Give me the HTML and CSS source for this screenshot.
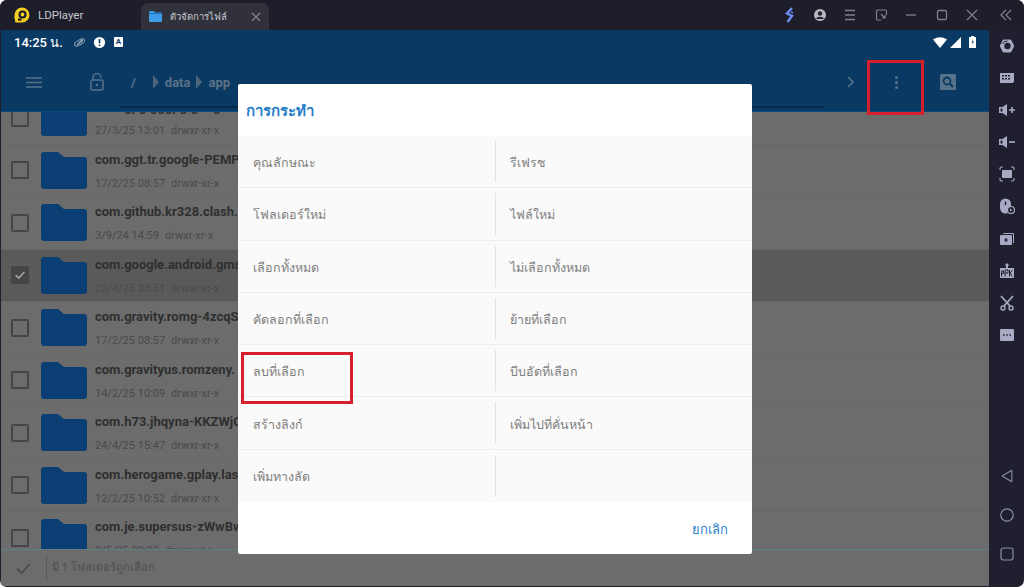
FILE: index.html
```html
<!DOCTYPE html>
<html lang="th">
<head>
<meta charset="utf-8">
<title>LDPlayer</title>
<link rel="stylesheet" href="styles.css">
</head>
<body>
<div class="app">
  <header class="titlebar">
    <svg class="logo" viewBox="0 0 16 16"><path d="M8 0.500a7.500 7.500 0 0 1 7.500 7.500 7.500 7.500 0 0 1-7.500 7.500H2.500a1.500 1.500 0 0 1-1.500-1.500V12H0.500V8A7.500 7.500 0 0 1 8 0.500z" fill="#f5cf1f"/><circle cx="8.500" cy="7.500" r="3" fill="none" stroke="#1d1d2b" stroke-width="2.200"/><rect x="4" y="11.500" width="3.500" height="2.200" fill="#1d1d2b"/></svg>
    <span class="brand">LDPlayer</span>
    <div class="tab">
      <svg class="tab-folder" viewBox="0 0 13 11"><path d="M0 1a1 1 0 0 1 1-1h4l1 1.500h6a1 1 0 0 1 1 1V10a1 1 0 0 1-1 1H1a1 1 0 0 1-1-1z" fill="#3d9be8"/><rect y="2" width="13" height="1" fill="#1d6fbb"/></svg>
      <span class="tab-title">ตัวจัดการไฟล์</span>
      <svg class="tab-close" viewBox="0 0 10 10"><path d="M1 1l8 8M9 1L1 9" stroke="#8b8b95" stroke-width="1.100"/></svg>
    </div>
    <div class="win-controls">
      <svg class="wi" viewBox="0 0 16 16"><path d="M10 1L5 6.500l5 2.500-4.500 6M10.500 5l-1 1" fill="none" stroke="#6d8ff0" stroke-width="2.400"/></svg>
      <svg class="wi" viewBox="0 0 16 16"><circle cx="8" cy="8" r="6" fill="#b9b9c4"/><circle cx="8" cy="6.500" r="2.200" fill="#23232f"/><path d="M3.800 12a4.500 3.500 0 0 1 8.400 0z" fill="#23232f"/></svg>
      <svg class="wi" viewBox="0 0 16 16"><path d="M3 3.500h10M3 8h10M3 12.500h10" stroke="#80808c" stroke-width="1.300"/></svg>
      <svg class="wi" viewBox="0 0 16 16"><path d="M8 13H4.500a1 1 0 0 1-1-1V4a1 1 0 0 1 1-1h8a1 1 0 0 1 1 1v4M8 7l4 4m0-3v3h-3" fill="none" stroke="#80808c" stroke-width="1.200"/></svg>
      <svg class="wi" viewBox="0 0 16 16"><path d="M3 8h10" stroke="#80808c" stroke-width="1.300"/></svg>
      <svg class="wi" viewBox="0 0 16 16"><rect x="3.500" y="3.500" width="9" height="9" rx="1.500" fill="none" stroke="#80808c" stroke-width="1.300"/></svg>
      <svg class="wi" viewBox="0 0 16 16"><path d="M3 3l10 10M13 3L3 13" stroke="#80808c" stroke-width="1.200"/></svg>
      <svg class="wi wi-collapse" viewBox="0 0 16 16"><path d="M8 3L3 8l5 5M13 3L8 8l5 5" fill="none" stroke="#80808c" stroke-width="1.200"/></svg>
    </div>
  </header>
  <div class="main">
    <main class="screen">
      <div class="statusbar">
        <span class="clock">14:25 น.</span>
        <svg class="si" viewBox="0 0 14 14"><ellipse cx="7" cy="7" rx="6" ry="2.600" transform="rotate(-30 7 7)" fill="none" stroke="#8fa3b5" stroke-width="1"/><path d="M9.500 3L5 8l-2 3 3-1.500L11 5" fill="#8fa3b5"/></svg>
        <svg class="si" viewBox="0 0 14 14"><circle cx="7" cy="7" r="6" fill="#fff"/><path d="M7 3.200v4.600M7 9.200v1.500" stroke="#0a3a63" stroke-width="1.700"/></svg>
        <span class="a-icon">A</span>
        <span class="status-right">
          <svg class="st-wifi" viewBox="0 0 14 11"><path d="M0 2.500Q7-2 14 2.500L7 11z" fill="#fff"/></svg>
          <svg class="st-signal" viewBox="0 0 11 11"><path d="M11 0v11H0z" fill="#fff"/></svg>
          <svg class="st-batt" viewBox="0 0 7 12"><path d="M2 0h3v1h1.500a.5.500 0 0 1 .5.500V11.500a.5.500 0 0 1-.5.500H.5a.5.500 0 0 1-.5-.500V1.500A.5.500 0 0 1 .5 1H2z" fill="#fff"/><path d="M4 3L2.500 6.500h1.500L3 9.500 5 5.500H3.700z" fill="#0a3a63"/></svg>
        </span>
      </div>
      <div class="toolbar">
        <svg class="tb-menu" viewBox="0 0 16 11"><path d="M0 1h16M0 5.500h16M0 10h16" stroke="#56738b" stroke-width="1.600"/></svg>
        <svg class="tb-lock" viewBox="0 0 14 18"><path d="M3 7V4.500a4 4 0 0 1 8 0V5" fill="none" stroke="#56738b" stroke-width="1.500"/><rect x="1" y="7" width="12" height="10" rx="1.500" fill="none" stroke="#56738b" stroke-width="1.500"/><circle cx="7" cy="12" r="1.300" fill="#56738b"/></svg>
        <div class="crumbs">
          <span class="crumb">/</span>
          <span class="crumb-sep"></span>
          <span class="crumb">data</span>
          <span class="crumb-sep"></span>
          <span class="crumb">app</span>
          <span class="crumb-track"></span>
        </div>
        <svg class="tb-next" viewBox="0 0 7 12"><path d="M1 1l5 5-5 5" fill="none" stroke="#56738b" stroke-width="1.600"/></svg>
        <span class="tb-more"><i></i><i></i><i></i></span>
        <svg class="tb-search" viewBox="0 0 16 16"><rect width="16" height="16" rx="1.500" fill="#56738b"/><circle cx="7" cy="7" r="3.500" fill="none" stroke="#0a3a63" stroke-width="1.800"/><path d="M9.500 9.500L13 13" stroke="#0a3a63" stroke-width="2"/></svg>
      </div>
      <div class="list">
        <div class="list-inner">
          <div class="row"><span class="check"></span><svg class="folder" viewBox="0 0 46 37"><path d="M0 3a3 3 0 0 1 3-3h14l6 5h20a3 3 0 0 1 3 3v26a3 3 0 0 1-3 3H3a3 3 0 0 1-3-3z"/></svg><div class="info"><div class="name">com.gpg.gggpg.google</div><div class="meta"><span>27/3/25 13:01</span><span>drwxr-xr-x</span></div></div></div>
          <div class="row"><span class="check"></span><svg class="folder" viewBox="0 0 46 37"><path d="M0 3a3 3 0 0 1 3-3h14l6 5h20a3 3 0 0 1 3 3v26a3 3 0 0 1-3 3H3a3 3 0 0 1-3-3z"/></svg><div class="info"><div class="name">com.ggt.tr.google-PEMP</div><div class="meta"><span>17/2/25 08:57</span><span>drwxr-xr-x</span></div></div></div>
          <div class="row"><span class="check"></span><svg class="folder" viewBox="0 0 46 37"><path d="M0 3a3 3 0 0 1 3-3h14l6 5h20a3 3 0 0 1 3 3v26a3 3 0 0 1-3 3H3a3 3 0 0 1-3-3z"/></svg><div class="info"><div class="name">com.github.kr328.clash.</div><div class="meta"><span>3/9/24 14:59</span><span>drwxr-xr-x</span></div></div></div>
          <div class="row selected"><span class="check on"><svg viewBox="0 0 16 16"><path d="M3 8l3.500 3.500L13 4.500" fill="none" stroke="#a8a8a8" stroke-width="1.800"/></svg></span><svg class="folder" viewBox="0 0 46 37"><path d="M0 3a3 3 0 0 1 3-3h14l6 5h20a3 3 0 0 1 3 3v26a3 3 0 0 1-3 3H3a3 3 0 0 1-3-3z"/></svg><div class="info"><div class="name">com.google.android.gms</div><div class="meta"><span>28/4/25 08:51</span><span>drwxr-xr-x</span></div></div></div>
          <div class="row"><span class="check"></span><svg class="folder" viewBox="0 0 46 37"><path d="M0 3a3 3 0 0 1 3-3h14l6 5h20a3 3 0 0 1 3 3v26a3 3 0 0 1-3 3H3a3 3 0 0 1-3-3z"/></svg><div class="info"><div class="name">com.gravity.romg-4zcqS</div><div class="meta"><span>17/2/25 08:57</span><span>drwxr-xr-x</span></div></div></div>
          <div class="row"><span class="check"></span><svg class="folder" viewBox="0 0 46 37"><path d="M0 3a3 3 0 0 1 3-3h14l6 5h20a3 3 0 0 1 3 3v26a3 3 0 0 1-3 3H3a3 3 0 0 1-3-3z"/></svg><div class="info"><div class="name">com.gravityus.romzeny.</div><div class="meta"><span>14/2/25 10:09</span><span>drwxr-xr-x</span></div></div></div>
          <div class="row"><span class="check"></span><svg class="folder" viewBox="0 0 46 37"><path d="M0 3a3 3 0 0 1 3-3h14l6 5h20a3 3 0 0 1 3 3v26a3 3 0 0 1-3 3H3a3 3 0 0 1-3-3z"/></svg><div class="info"><div class="name">com.h73.jhqyna-KKZWjC</div><div class="meta"><span>24/4/25 15:47</span><span>drwxr-xr-x</span></div></div></div>
          <div class="row"><span class="check"></span><svg class="folder" viewBox="0 0 46 37"><path d="M0 3a3 3 0 0 1 3-3h14l6 5h20a3 3 0 0 1 3 3v26a3 3 0 0 1-3 3H3a3 3 0 0 1-3-3z"/></svg><div class="info"><div class="name">com.herogame.gplay.las</div><div class="meta"><span>12/2/25 10:52</span><span>drwxr-xr-x</span></div></div></div>
          <div class="row"><span class="check"></span><svg class="folder" viewBox="0 0 46 37"><path d="M0 3a3 3 0 0 1 3-3h14l6 5h20a3 3 0 0 1 3 3v26a3 3 0 0 1-3 3H3a3 3 0 0 1-3-3z"/></svg><div class="info"><div class="name">com.je.supersus-zWwBw</div><div class="meta"><span>2/5/25 09:33</span><span>drwxr-xr-x</span></div></div></div>
        </div>
      </div>
      <div class="selbar">
        <svg class="sel-check" viewBox="0 0 16 14"><path d="M1 7l5 5L15 2" fill="none" stroke="#444" stroke-width="1.500"/></svg>
        <span class="sel-text">มี 1 โฟลเดอร์ถูกเลือก</span>
      </div>

      <div class="dialog">
        <h2 class="dialog-title">การกระทำ</h2>
        <div class="actions">
          <div class="action">คุณลักษณะ</div><div class="action">รีเฟรช</div>
          <div class="action">โฟลเดอร์ใหม่</div><div class="action">ไฟล์ใหม่</div>
          <div class="action">เลือกทั้งหมด</div><div class="action">ไม่เลือกทั้งหมด</div>
          <div class="action">คัดลอกที่เลือก</div><div class="action">ย้ายที่เลือก</div>
          <div class="action">ลบที่เลือก</div><div class="action">บีบอัดที่เลือก</div>
          <div class="action">สร้างลิงก์</div><div class="action">เพิ่มไปที่คั่นหน้า</div>
          <div class="action">เพิ่มทางลัด</div><div class="action"></div>
        </div>
        <div class="dialog-foot"><span class="cancel">ยกเลิก</span></div>
      </div>
      <div class="mark mark-more"></div>
      <div class="mark mark-delete"></div>
    </main>
    <aside class="sidebar">
      <div class="side-top">
        <svg class="sb" viewBox="0 0 16 16"><path d="M5 1.500h6a1.500 1.500 0 0 1 1.300.7l2.500 4.800a2 2 0 0 1 0 2l-2.500 4.800a1.500 1.500 0 0 1-1.300.7H5a1.500 1.500 0 0 1-1.300-.7L1.200 9a2 2 0 0 1 0-2l2.500-4.800A1.500 1.500 0 0 1 5 1.500z" fill="#a9a9c4"/><circle cx="8.500" cy="8" r="3.200" fill="#1f1f2f"/><path d="M3.500 6a5 5 0 0 1 5-3" fill="none" stroke="#1f1f2f" stroke-width="1"/></svg>
        <svg class="sb" viewBox="0 0 16 16"><path d="M1 3h14v9h-1v1H1z" fill="#a9a9c4"/><path d="M3 5h2v1.500H3zM6 5h2v1.500H6zM9 5h2v1.500H9zM3 8h2v1.500H3zM6 8h2v1.500H6zM9 8h2v1.500H9z" fill="#1f1f2f"/></svg>
        <svg class="sb" viewBox="0 0 16 16"><path d="M0 5h3.500L8 2v12l-4.500-3H0z" fill="#a9a9c4"/><path d="M1.500 6.500h2v3h-2z" fill="#1f1f2f"/><path d="M10 8h6M13 5v6" stroke="#a9a9c4" stroke-width="1.600"/></svg>
        <svg class="sb" viewBox="0 0 16 16"><path d="M0 5h3.500L8 2v12l-4.500-3H0z" fill="#a9a9c4"/><path d="M1.500 6.500h2v3h-2z" fill="#1f1f2f"/><path d="M10 8h6" stroke="#a9a9c4" stroke-width="1.600"/></svg>
        <svg class="sb" viewBox="0 0 16 16"><path d="M1 4V2.500A1.500 1.500 0 0 1 2.500 1H4M12 1h1.500A1.500 1.500 0 0 1 15 2.500V4M15 12v1.500a1.500 1.500 0 0 1-1.500 1.500H12M4 15H2.500A1.500 1.500 0 0 1 1 13.500V12" fill="none" stroke="#a9a9c4" stroke-width="1.100"/><rect x="3" y="4" width="10" height="8" rx="1" fill="#a9a9c4"/></svg>
        <svg class="sb" viewBox="0 0 16 16"><path d="M6.500 0.500A5.500 5.500 0 0 1 12 6v2.500A5 5 0 0 0 8.500 15.500h-2A5.500 5.500 0 0 1 1 10V6A5.500 5.500 0 0 1 6.500 0.500z" fill="#a9a9c4"/><path d="M6.500 3.500v3.500" stroke="#1f1f2f" stroke-width="1.400"/><circle cx="12" cy="12" r="3.500" fill="none" stroke="#a9a9c4" stroke-width="1.200"/><path d="M11 10.500v3l2.500-1.500z" fill="#a9a9c4"/></svg>
        <svg class="sb" viewBox="0 0 16 16"><path d="M4 3a1 1 0 0 1 1-1h9a1 1 0 0 1 1 1v9h-1V3H4z" fill="#a9a9c4"/><rect x="1" y="4" width="12" height="10" rx="1" fill="#a9a9c4"/><path d="M7 7v4M5 9h4" stroke="#1f1f2f" stroke-width="1.200"/></svg>
        <svg class="sb" viewBox="0 0 16 16"><path d="M8 0l2.500 2.500H9V5H7V2.500H5.500z" fill="#a9a9c4"/><rect x="1" y="5" width="14" height="10" fill="#a9a9c4"/><path d="M2.500 13.500V8h2v2.500h-2M6 13.500V7h3v3H6M10.500 7v6.500M13.500 7l-2.500 3 2.500 3.500" fill="none" stroke="#1f1f2f" stroke-width="1"/></svg>
        <svg class="sb" viewBox="0 0 16 16"><path d="M2 1l9 10M14 1L5 11" stroke="#a9a9c4" stroke-width="1.800"/><circle cx="4" cy="13" r="2" fill="none" stroke="#a9a9c4" stroke-width="1.400"/><circle cx="12" cy="13" r="2" fill="none" stroke="#a9a9c4" stroke-width="1.400"/></svg>
        <svg class="sb" viewBox="0 0 16 16"><rect x="1" y="2" width="14" height="12" rx="1" fill="#a9a9c4"/><path d="M4 8h1.500M7.300 8h1.500M10.500 8H12" stroke="#1f1f2f" stroke-width="1.500"/></svg>
      </div>
      <div class="side-nav">
        <svg class="nav" viewBox="0 0 14 16"><path d="M12.500 1.500v13L1.500 8z" fill="none" stroke="#8e8ea6" stroke-width="1.200" stroke-linejoin="round"/></svg>
        <svg class="nav" viewBox="0 0 14 14"><circle cx="7" cy="7" r="6.200" fill="none" stroke="#8e8ea6" stroke-width="1.200"/></svg>
        <svg class="nav" viewBox="0 0 14 14"><rect x="1" y="1" width="12" height="12" rx="2.500" fill="none" stroke="#8e8ea6" stroke-width="1.200"/></svg>
      </div>
    </aside>
  </div>
</div>
</body>
</html>
```
FILE: styles.css
```css
* { box-sizing: border-box; }
html, body { margin: 0; height: 100%; background: #fff; overflow: hidden; }
body { font-family: Roboto, "Noto Sans", "Liberation Sans", sans-serif; }

.app { width: 1024px; height: 587px; background: #1f1f2f; border-radius: 7px; overflow: hidden; display: flex; flex-direction: column; }

/* title bar */
.titlebar { height: 30px; flex: none; display: flex; align-items: center; background: #1e1e2b; padding-left: 14px; }
.logo { width: 16px; height: 16px; }
.brand { margin-left: 8px; width: 103px; font-size: 11.500px; color: #c6c6cf; }
.tab { align-self: flex-end; width: 128px; height: 27px; background: #30313b; border-radius: 7px 7px 0 0; display: flex; align-items: center; padding: 0 7px 0 8px; }
.tab-folder { width: 13px; height: 11px; flex: none; }
.tab-title { margin-left: 8px; flex: 1; font-size: 9.500px; color: #c9c9d0; }
.tab-close { width: 10px; height: 10px; flex: none; margin-right: 1px; }
.win-controls { margin-left: auto; display: flex; align-items: center; height: 100%; padding-right: 10px; }
.wi { width: 16px; height: 16px; margin-left: 14.400px; }
.wi-collapse { margin-left: 18px; }

/* android screen */
.main { flex: 1; display: flex; min-height: 0; }
.screen { position: relative; width: 988px; margin: 0 0 1px 1px; display: flex; flex-direction: column; overflow: hidden; background: #6c6c6c; }
.statusbar { height: 28px; flex: none; display: flex; align-items: center; padding: 0 13px 4px; background: #0a3a63; color: #fff; }
.clock { font-size: 13px; font-weight: 500; width: 59px; }
.si { width: 13px; height: 13px; margin-right: 7px; }
.a-icon { margin-left: 1px; width: 9px; height: 10px; background: #fff; color: #0a3a63; font-size: 8px; font-weight: 700; line-height: 10px; text-align: center; border-radius: 1px; }
.status-right { margin-left: auto; display: flex; align-items: center; }
.st-wifi { width: 14px; height: 11px; margin-right: 3px; }
.st-signal { width: 11px; height: 11px; margin-right: 8px; }
.st-batt { width: 7px; height: 12px; }

.toolbar { height: 53px; flex: none; display: flex; align-items: center; background: #0a3a63; padding: 0 32px 5px 25px; }
.tb-menu { width: 16px; height: 11px; flex: none; }
.tb-lock { width: 14px; height: 18px; margin-left: 48px; flex: none; }
.crumbs { position: relative; width: 703px; height: 100%; margin-left: 17px; padding-left: 10px; display: flex; align-items: center; }
.crumb { font-size: 13px; font-weight: 700; color: #5a7186; }
.crumb-sep { width: 0; height: 0; margin: 0 6px 0 17px; border-style: solid; border-width: 7px 0 7px 6px; border-color: transparent transparent transparent #4d6578; }
.crumb-sep + .crumb + .crumb-sep { margin-left: 6px; }
.crumb-sep:first-of-type { margin-left: 15px; }
.crumb-track { position: absolute; left: 0; right: 0; bottom: -2px; height: 2px; background: #08294a; }
.tb-next { width: 7px; height: 12px; margin-left: 23px; flex: none; }
.tb-more { display: flex; flex-direction: column; gap: 2px; margin-left: 41px; flex: none; }
.tb-more i { width: 3px; height: 3px; border-radius: 50%; background: #56738b; }
.tb-search { width: 16px; height: 16px; margin-left: 42px; flex: none; }

.list { flex: 1; min-height: 0; overflow: hidden; background: #6c6c6c; border-top: 1px solid #0b4a80; }
.list-inner { margin-top: -20px; }
.row { height: 52.500px; display: flex; align-items: center; padding-left: 10px; border-bottom: 1px solid #676767; }
.row.selected { background: #5a5a5a; }
.check { width: 18px; height: 18px; flex: none; border: 2px solid #454545; border-radius: 2px; }
.check.on { background: #454545; }
.check.on svg { display: block; width: 14px; height: 14px; }
.folder { width: 46px; height: 37px; margin-left: 12px; flex: none; fill: #0b3f73; }
.info { margin-left: 8px; padding-top: 2px; width: 143px; overflow: hidden; white-space: nowrap; }
.name { font-size: 13px; font-weight: 700; color: #2f2f2f; line-height: 16px; }
.meta { margin-top: 9px; font-size: 11px; line-height: 14px; color: #4a4a4a; display: flex; gap: 6px; }

.selbar { height: 37px; flex: none; display: flex; align-items: center; background: #6c6c6c; border-top: 1px solid #5b8088; padding-left: 15px; }
.sel-check { width: 15px; height: 13px; flex: none; }
.sel-text { margin-left: 15px; padding-left: 5px; height: 26px; line-height: 26px; border-left: 1px solid #5c5c5c; font-size: 11.200px; color: #4f4f4f; }

/* dialog */
.dialog { position: absolute; left: 237px; top: 54px; width: 514px; height: 470px; background: #fff; border-radius: 2px; display: flex; flex-direction: column; }
.dialog-title { margin: 0; height: 52px; padding: 17px 0 0 8px; font-size: 15px; line-height: 20px; font-weight: 700; color: #2a7fc9; }
.actions { height: 366px; background: #fafafa; display: grid; grid-template-columns: 1fr 1fr; grid-auto-rows: 1fr; }
.action { position: relative; display: flex; align-items: center; padding-left: 15px; padding-top: 3px; font-size: 12.500px; color: #808080; border-bottom: 1px solid #eeeeee; }
.action:nth-child(2n)::before { content: ""; position: absolute; left: 0; top: 5px; bottom: 5px; width: 1px; background: #e4e4e4; }
.action:nth-last-child(-n+2) { border-bottom: none; }
.dialog-foot { flex: 1; display: flex; justify-content: flex-end; align-items: center; padding: 2px 24px 0 0; }
.cancel { font-size: 13px; font-weight: 500; color: #2a7fc9; }

/* red annotation frames */
.mark { position: absolute; border: 3px solid #d61f2c; }
.mark-more { left: 866px; top: 30px; width: 57px; height: 55px; }
.mark-delete { left: 240px; top: 322px; width: 112px; height: 52px; }

/* sidebar */
.sidebar { flex: 1; display: flex; flex-direction: column; justify-content: space-between; align-items: center; padding: 8px 0 26px; }
.side-top { display: flex; flex-direction: column; align-items: center; gap: 16.100px; }
.sb { width: 16px; height: 16px; display: block; }
.side-nav { display: flex; flex-direction: column; align-items: center; gap: 25px; }
.nav { width: 14px; height: 14px; display: block; }
```
